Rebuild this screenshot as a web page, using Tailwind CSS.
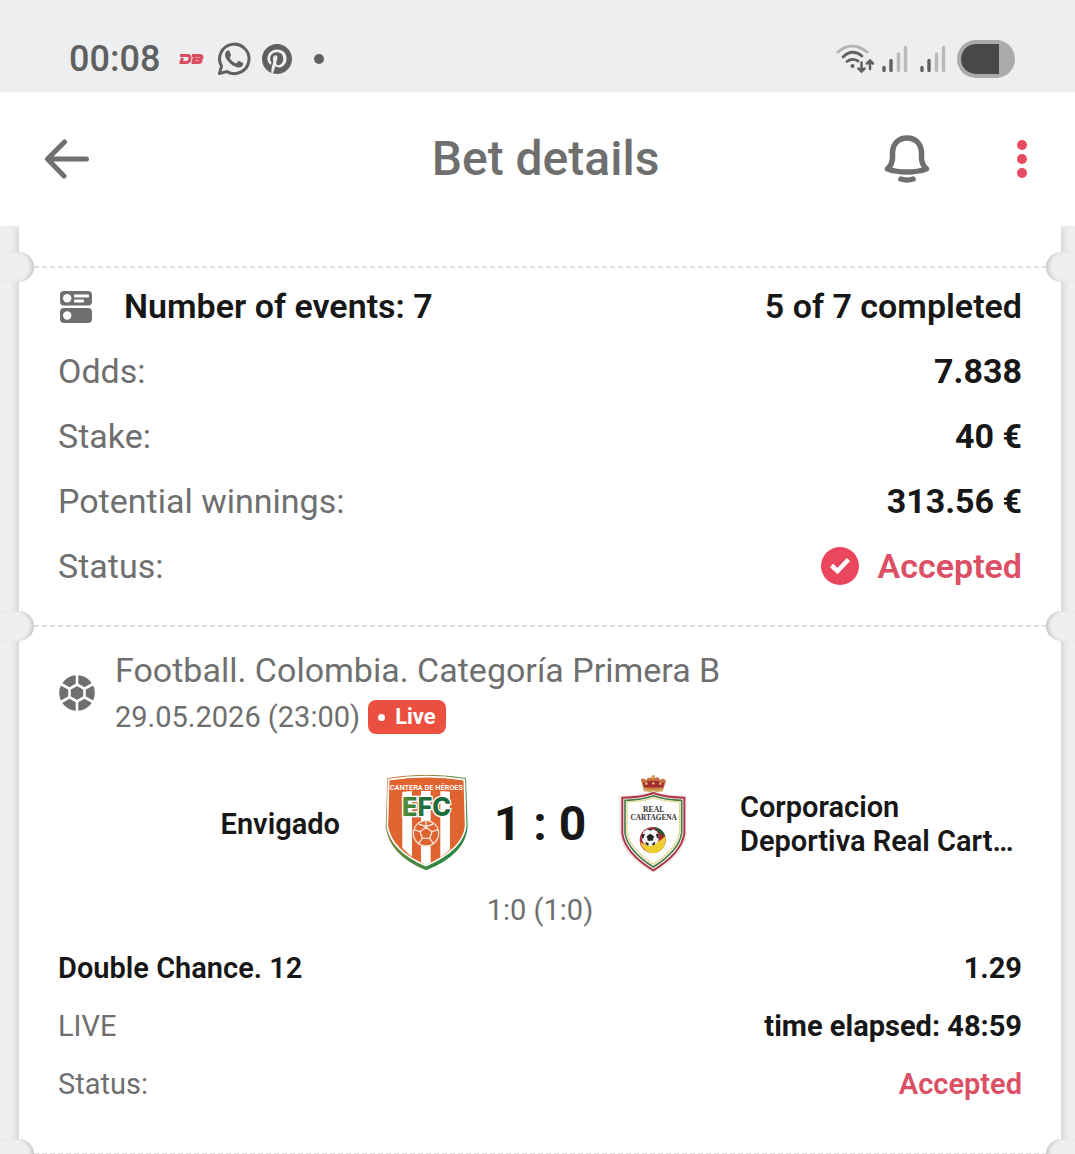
<!DOCTYPE html>
<html lang="en">

<head>
    <meta charset="UTF-8">
    <meta name="viewport" content="width=device-width, initial-scale=1.0">
    <title>Bet details</title>
    <script src="https://cdn.jsdelivr.net/npm/@tailwindcss/browser@4"></script>
</head>

<body class="bg-[#eeeff1] font-[Roboto,sans-serif] text-[#171717]">
    <div class="flex min-h-screen flex-col">
        <!-- Phone status bar -->
        <div class="flex h-[92px] items-center justify-between bg-[#edeef0] pt-[26px] pr-[60px] pl-[69px] text-[#5f6060]">
            <div class="flex items-center">
                <span class="text-[36px] leading-[44px] font-medium">00:08</span>
                <svg class="ml-[18px] h-[12px] w-[26px]" viewBox="0 0 26 12" fill="none" stroke="#dc4d62" stroke-width="3">
                    <path d="M2 2.500H9.500Q12.500 2.500 12 5Q11.500 9.500 8 9.500H1.500M4.500 5L3 9.500M14 2.500H21.500Q24.500 2.500 24 4.300Q23.600 6 21 6H15.500M21 6Q23.500 6.200 23 8Q22.500 9.500 20 9.500H13.500M16.500 4L15 9" />
                </svg>
                <svg class="ml-[12px] h-[36px] w-[36px]" viewBox="0 0 24 24" fill="currentColor">
                    <path d="M17.472 14.382c-.297-.149-1.758-.867-2.030-.967-.273-.099-.471-.148-.670.150-.197.297-.767.966-.940 1.164-.173.199-.347.223-.644.075-.297-.150-1.255-.463-2.390-1.475-.883-.788-1.480-1.761-1.653-2.059-.173-.297-.018-.458.130-.606.134-.133.298-.347.446-.520.149-.174.198-.298.298-.497.099-.198.050-.371-.025-.520-.075-.149-.669-1.612-.916-2.207-.242-.579-.487-.500-.669-.510-.173-.008-.371-.010-.570-.010-.198 0-.520.074-.792.372-.272.297-1.040 1.016-1.040 2.479 0 1.462 1.065 2.875 1.213 3.074.149.198 2.096 3.200 5.077 4.487.709.306 1.262.489 1.694.625.712.227 1.360.195 1.871.118.571-.085 1.758-.719 2.006-1.413.248-.694.248-1.289.173-1.413-.074-.124-.272-.198-.570-.347z" />
                    <path d="M2.300 21.700L3.700 16.800A9.800 9.800 0 1 1 7.300 20.400Z" fill="none" stroke="currentColor" stroke-width="2" stroke-linejoin="round" />
                </svg>
                <svg class="ml-[10px] h-[30px] w-[30px]" viewBox="0 0 24 24" fill="currentColor">
                    <path d="M12 0C5.373 0 0 5.372 0 12c0 5.084 3.163 9.426 7.627 11.174-.105-.949-.200-2.405.042-3.441.218-.937 1.407-5.965 1.407-5.965s-.359-.719-.359-1.782c0-1.668.967-2.914 2.171-2.914 1.023 0 1.518.769 1.518 1.690 0 1.029-.655 2.568-.994 3.995-.283 1.194.599 2.169 1.777 2.169 2.133 0 3.772-2.249 3.772-5.495 0-2.873-2.064-4.882-5.012-4.882-3.414 0-5.418 2.561-5.418 5.207 0 1.031.397 2.138.893 2.738.098.119.112.224.083.345l-.333 1.360c-.053.220-.174.267-.402.161-1.499-.698-2.436-2.889-2.436-4.649 0-3.785 2.750-7.262 7.929-7.262 4.163 0 7.398 2.967 7.398 6.931 0 4.136-2.607 7.464-6.227 7.464-1.216 0-2.359-.631-2.750-1.378l-.748 2.853c-.271 1.043-1.002 2.350-1.492 3.146C9.570 23.812 10.763 24 12 24c6.627 0 12-5.373 12-12S18.627 0 12 0z" />
                </svg>
                <span class="ml-[22px] size-[10px] rounded-full bg-[#5f6060]"></span>
            </div>
            <div class="flex items-center">
                <svg class="h-[30px] w-[38px]" viewBox="0 0 38 30" fill="none" stroke="#5f6060" stroke-width="2.800" stroke-linecap="round">
                    <path d="M2 8Q16 -4 31 8" stroke="#b4b5b6" />
                    <path d="M7 13Q16 4 26 12" />
                    <path d="M11 17.500Q16 13.500 22 17" />
                    <circle cx="16.500" cy="22" r="2" fill="#5f6060" stroke="none" />
                    <path d="M25.500 18.500V27M22.500 24.500L25.500 27.500L28.500 24.500M34 25V17M31 19.500L34 16.500L37 19.500" stroke-width="2.500" />
                </svg>
                <svg class="ml-[8px] h-[28px] w-[26px]" viewBox="0 0 26 28" stroke-width="3.400" stroke-linecap="round">
                    <path d="M2 22.500V25.500M9 15.500V25.500" stroke="#5f6060" />
                    <path d="M16.500 9V25.500M23.500 2.500V25.500" stroke="#b8b9ba" />
                </svg>
                <svg class="ml-[12px] h-[28px] w-[26px]" viewBox="0 0 26 28" stroke-width="3.400" stroke-linecap="round">
                    <path d="M2 22.500V25.500M9 15.500V25.500" stroke="#5f6060" />
                    <path d="M16.500 9V25.500M23.500 2.500V25.500" stroke="#b8b9ba" />
                </svg>
                <div class="ml-[11px] h-[38px] w-[58px] rounded-full bg-[#a9aaab] py-[4px] pl-[4px]">
                    <div class="h-full w-[38px] rounded-l-full bg-[#484848]"></div>
                </div>
            </div>
        </div>

        <!-- Title bar -->
        <header class="grid h-[134px] grid-cols-[1fr_auto_1fr] items-center bg-white pr-[28px] pl-[44px] text-[#6f6f6f]">
            <button type="button" aria-label="Back" class="justify-self-start">
                <svg class="h-[40px] w-[46px]" viewBox="0 0 46 40" fill="none" stroke="currentColor" stroke-width="5" stroke-linecap="round" stroke-linejoin="round">
                    <path d="M42.500 20H4M20.500 3L3.500 20L20 37" />
                </svg>
            </button>
            <h1 class="text-[48px] leading-[56px] font-medium">Bet details</h1>
            <div class="mr-[15px] flex items-center gap-[82px] justify-self-end">
                <button type="button" aria-label="Notifications">
                    <svg class="h-[50px] w-[46px]" viewBox="0 0 46 50" fill="none" stroke="currentColor" stroke-width="5.500" stroke-linecap="round" stroke-linejoin="round">
                        <path d="M23 4C13.500 4 8.500 11 8.500 19V24C8.500 29 7 31.500 3.500 35C15 39 31 39 42.500 35C39 31.500 37.500 29 37.500 24V19C37.500 11 32.500 4 23 4Z" />
                        <path d="M17 45Q23 47 29 45" />
                    </svg>
                </button>
                <button type="button" aria-label="More" class="flex w-[20px] flex-col items-center gap-[4px]">
                    <span class="size-[10px] rounded-full bg-[#e64b62]"></span>
                    <span class="size-[10px] rounded-full bg-[#e64b62]"></span>
                    <span class="size-[10px] rounded-full bg-[#e64b62]"></span>
                </button>
            </div>
        </header>

        <!-- Bet slip -->
        <main class="flex-1 overflow-hidden pr-[14px] pl-[19px]">
            <div class="bg-white pt-[41px] shadow-[0_0_9px_rgba(0,0,0,0.2)]">
                <section class="relative px-[39px] pt-[6px] pb-[28px]">
                    <div class="absolute inset-x-[15px] -top-px h-[2px] bg-[repeating-linear-gradient(90deg,#dfdfdf_0_5px,transparent_5px_8px)]"></div>
                    <span class="absolute -top-[15px] -left-[19px] h-[30px] w-[34px] rounded-r-full bg-[#eeeff1] shadow-[inset_-4px_0_4px_-2px_rgba(0,0,0,0.2)]"></span>
                    <span class="absolute -top-[15px] -right-[19px] h-[30px] w-[34px] rounded-l-full bg-[#eeeff1] shadow-[inset_4px_0_4px_-2px_rgba(0,0,0,0.2)]"></span>
                    <dl class="text-[34px] leading-[40px]">
                        <div class="flex h-[65px] items-center justify-between font-semibold">
                            <dt class="flex items-center">
                                <svg class="mt-[3px] mr-[32px] ml-[2px] h-[32px] w-[32px]" viewBox="0 0 32 32" fill="#6f6f6f">
                                    <rect width="32" height="14.500" rx="4" />
                                    <rect y="17" width="32" height="15" rx="4" />
                                    <g fill="#fff">
                                        <circle cx="7.200" cy="7.200" r="4.200" />
                                        <circle cx="7.200" cy="24.500" r="4.200" />
                                        <rect x="14" y="3.500" width="15" height="3" rx="1" />
                                        <rect x="14" y="8.500" width="10" height="3" rx="1" />
                                    </g>
                                </svg>
                                Number of events: 7
                            </dt>
                            <dd>5 of 7 completed</dd>
                        </div>
                        <div class="flex h-[65px] items-center justify-between">
                            <dt class="text-[#6f6f6f]">Odds:</dt>
                            <dd class="font-bold">7.838</dd>
                        </div>
                        <div class="flex h-[65px] items-center justify-between">
                            <dt class="text-[#6f6f6f]">Stake:</dt>
                            <dd class="font-bold">40 €</dd>
                        </div>
                        <div class="flex h-[65px] items-center justify-between">
                            <dt class="text-[#6f6f6f]">Potential winnings:</dt>
                            <dd class="font-bold">313.56 €</dd>
                        </div>
                        <div class="flex h-[65px] items-center justify-between">
                            <dt class="text-[#6f6f6f]">Status:</dt>
                            <dd class="flex items-center gap-[19px] font-semibold text-[#dc5065]">
                                <svg class="h-[38px] w-[38px]" viewBox="0 0 38 38" fill="none">
                                    <circle cx="19" cy="19" r="19" fill="#ea465e" />
                                    <path d="M10.500 18.500L16.500 24L27.500 12.500" stroke="#fff" stroke-width="4.500" />
                                </svg>
                                Accepted
                            </dd>
                        </div>
                    </dl>
                </section>

                <section class="relative px-[39px] pt-[20px] pb-[41px]">
                    <div class="absolute inset-x-[15px] -top-px h-[2px] bg-[repeating-linear-gradient(90deg,#dfdfdf_0_5px,transparent_5px_8px)]"></div>
                    <span class="absolute -top-[15px] -left-[19px] h-[30px] w-[34px] rounded-r-full bg-[#eeeff1] shadow-[inset_-4px_0_4px_-2px_rgba(0,0,0,0.2)]"></span>
                    <span class="absolute -top-[15px] -right-[19px] h-[30px] w-[34px] rounded-l-full bg-[#eeeff1] shadow-[inset_4px_0_4px_-2px_rgba(0,0,0,0.2)]"></span>

                    <div class="flex items-center text-[#6f6f6f]">
                        <svg class="mr-[20px] ml-px h-[36px] w-[36px]" viewBox="0 0 36 36">
                            <circle cx="18" cy="18" r="17.800" fill="#6f6f6f" />
                            <path d="M18 9.500L25.500 13.800V22.200L18 26.500L10.500 22.200V13.800Z" fill="#6f6f6f" stroke="#fff" stroke-width="2.600" />
                            <path d="M18 0V9M26 13.500L34 9M26 22.500L34 27M18 27V36M10 22.500L2 27M10 13.500L2 9" stroke="#fff" stroke-width="2.600" />
                        </svg>
                        <div>
                            <h2 class="text-[34px] leading-[48px]">Football. Colombia. Categoría Primera B</h2>
                            <div class="flex h-[46px] items-center gap-2">
                                <time class="text-[29px] leading-[34px]">29.05.2026 (23:00)</time>
                                <span class="flex h-[34px] items-center gap-[10px] rounded-lg bg-[#ea4f40] px-[10px] text-[22px] leading-[34px] font-bold text-white">
                                    <span class="size-[7px] rounded-full bg-white"></span>
                                    Live
                                </span>
                            </div>
                        </div>
                    </div>

                    <div class="mt-[35px] grid grid-cols-[1fr_400px_1fr] items-center text-[29px] leading-[34px] font-semibold">
                        <div class="text-right">Envigado</div>
                        <div class="flex items-center justify-between px-[45px]">
                            <svg class="h-[97px] w-[83px]" viewBox="45 43 249 291">
                                <defs>
                                    <linearGradient id="efcRim" x1="0" y1="0" x2="1" y2="1">
                                        <stop offset="0" stop-color="#d8763c" />
                                        <stop offset="0.500" stop-color="#5d8a3c" />
                                        <stop offset="1" stop-color="#118245" />
                                    </linearGradient>
                                    <linearGradient id="efcLetters" x1="0" y1="0" x2="1" y2="0">
                                        <stop offset="0" stop-color="#5a8f35" />
                                        <stop offset="0.500" stop-color="#1d6a3a" />
                                        <stop offset="1" stop-color="#1d6a3a" />
                                    </linearGradient>
                                    <clipPath id="efcField">
                                        <path d="M66 96Q170 84 275 96L279 203Q270 265 168 313Q80 270 64 200Z" />
                                    </clipPath>
                                </defs>
                                <path d="M52 52Q170 33 288 52L293 198Q288 280 168 329Q60 286 47 200Z" fill="url(#efcRim)" />
                                <path d="M56 57Q170 39 283 57L287 196Q280 266 168 315Q66 272 52 198Z" fill="#e0642f" stroke="#fff" stroke-width="5" />
                                <g clip-path="url(#efcField)">
                                    <path d="M97 88H126V330H97ZM153 88H182V330H153ZM211 88H240V330H211Z" fill="#fff" />
                                    <circle cx="168" cy="218" r="38" fill="#e0642f" stroke="#f9e4da" stroke-width="4" />
                                    <path d="M168 200L186 213L179 233H157L150 213ZM168 200V182M186 213L204 207M179 233L190 248M157 233L146 248M150 213L132 207M146 190L168 198L190 190" fill="none" stroke="#f9e4da" stroke-width="4" />
                                </g>
                                <text x="169" y="88" text-anchor="middle" font-family="Roboto, sans-serif" font-size="22" font-weight="600" fill="#fff">CANTERA DE HÉROES</text>
                                <text x="170" y="167" text-anchor="middle" font-family="Inter, sans-serif" font-size="76" font-weight="800" fill="url(#efcLetters)" stroke="#fff" stroke-width="8" paint-order="stroke">EFC</text>
                            </svg>
                            <div class="text-[48px] leading-[56px] font-bold">1 : 0</div>
                            <svg class="h-[97px] w-[83px]" viewBox="37 40 249 291">
                                <path d="M125 60Q121 48 133 51L140 56Q142 44 153 50Q156 40 166 49Q178 42 181 55Q194 46 199 59L190 85H133Z" fill="#c8703f" />
                                <path d="M130 64Q160 51 193 64L190 77H134Z" fill="#a02c2f" />
                                <path d="M132 79Q160 86 190 79V89Q160 94 132 89ZM157 41H166V51H157Z" fill="#cfa158" />
                                <g fill="#e8b57b">
                                    <circle cx="140" cy="66" r="4" />
                                    <circle cx="161" cy="65" r="4" />
                                    <circle cx="182" cy="66" r="4" />
                                </g>
                                <path d="M59 102Q125 101 161 88Q199 101 261 102V218Q252 283 161 333Q68 283 59 218Z" fill="#f3e7e6" />
                                <path d="M68 108Q125 108 161 94Q198 108 254 108V216Q245 275 161 326Q77 275 68 216Z" fill="#fff" stroke="#af3848" stroke-width="6" />
                                <path d="M76 116Q128 114 161 102Q196 114 246 116V215Q237 268 161 316Q85 268 76 215Z" fill="#fff" stroke="#477a4a" stroke-width="5" />
                                <path d="M82 121Q130 119 161 108Q193 119 240 121V213Q231 263 161 308Q92 263 82 213Z" fill="#fff" stroke="#e3d990" stroke-width="4" />
                                <text x="162" y="151" text-anchor="middle" font-family="Liberation Serif, serif" font-size="23" font-weight="700" fill="#333">REAL</text>
                                <text x="162" y="175" text-anchor="middle" font-family="Liberation Serif, serif" font-size="22" font-weight="700" fill="#333">CARTAGENA</text>
                                <circle cx="159" cy="235" r="39" fill="#ac2833" />
                                <path d="M121 240Q152 265 197 224Q202 264 166 275Q132 275 121 240Z" fill="#edcf2f" />
                                <path d="M160 196Q190 198 197 225L186 220Z" fill="#245b36" />
                                <circle cx="152" cy="227" r="26" fill="#f5f5f5" />
                                <path d="M152 216L163 224L159 237H145L141 224ZM143 202L152 207L161 202ZM127 218L135 216L133 227L127 232ZM177 218L169 216L171 227L177 232ZM137 247L139 240L148 247L145 252ZM167 247L165 240L157 247L160 252Z" fill="#222" />
                            </svg>
                        </div>
                        <div>Corporacion<br>Deportiva Real Cart…</div>
                    </div>

                    <p class="mt-[21px] text-center text-[29px] leading-[34px] text-[#6f6f6f]">1:0 (1:0)</p>

                    <dl class="mt-[12px] text-[29px] leading-[34px]">
                        <div class="flex h-[58px] items-center justify-between font-semibold">
                            <dt>Double Chance. 12</dt>
                            <dd class="font-bold">1.29</dd>
                        </div>
                        <div class="flex h-[58px] items-center justify-between">
                            <dt class="text-[#6f6f6f]">LIVE</dt>
                            <dd class="font-bold">time elapsed: 48:59</dd>
                        </div>
                        <div class="flex h-[58px] items-center justify-between">
                            <dt class="text-[#6f6f6f]">Status:</dt>
                            <dd class="font-semibold text-[#dc5065]">Accepted</dd>
                        </div>
                    </dl>
                </section>

                <div class="relative">
                    <div class="absolute inset-x-[15px] -top-px h-[2px] bg-[repeating-linear-gradient(90deg,#dfdfdf_0_5px,transparent_5px_8px)]"></div>
                    <span class="absolute -top-[15px] -left-[19px] h-[30px] w-[34px] rounded-r-full bg-[#eeeff1] shadow-[inset_-4px_0_4px_-2px_rgba(0,0,0,0.2)]"></span>
                    <span class="absolute -top-[15px] -right-[19px] h-[30px] w-[34px] rounded-l-full bg-[#eeeff1] shadow-[inset_4px_0_4px_-2px_rgba(0,0,0,0.2)]"></span>
                </div>
            </div>
        </main>
    </div>
</body>

</html>
